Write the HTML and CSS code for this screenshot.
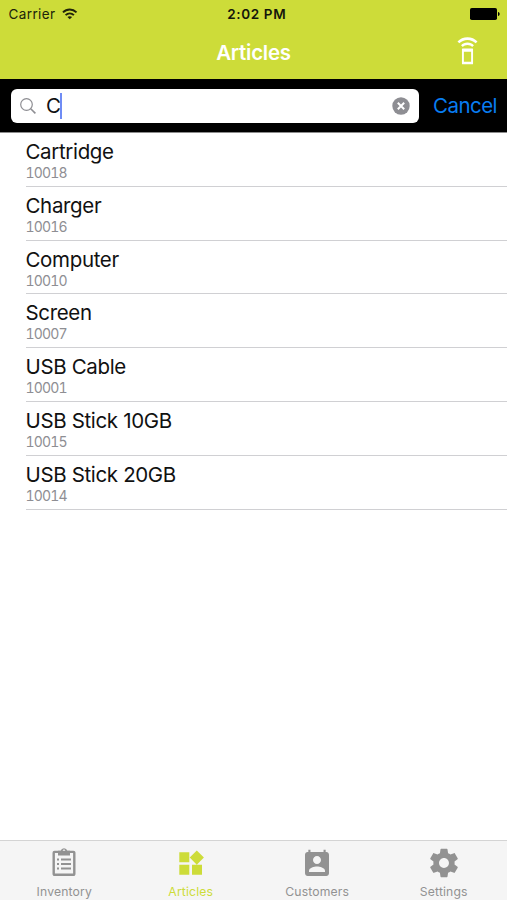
FILE: index.html
```html
<!DOCTYPE html>
<html lang="en">
<head>
<meta charset="utf-8">
<title>Articles</title>
<link rel="stylesheet" href="styles.css">
</head>
<body>
<div class="app">
  <header class="top">
    <div class="status">
      <div class="carrier"><span>Carrier</span>
        <svg class="wifi" viewBox="0 0 16 12" fill="none" stroke="#20230a" stroke-width="2"><path d="M1 4.3C5 .3 11 .3 15 4.3M3.7 7.2c2.5-2.4 6.1-2.4 8.6 0"/><path d="M8 11.5 5.6 9.2c1.3-1.2 3.5-1.2 4.8 0z" fill="#20230a" stroke="none"/></svg>
      </div>
      <span class="time">2:02 PM</span>
      <svg class="battery" viewBox="0 0 30 12"><rect width="27" height="12" rx="1.8"/><path d="M28 4c2.2.5 2.2 3.5 0 4z"/></svg>
    </div>
    <div class="nav">
      <h1>Articles</h1>
      <svg class="remote" viewBox="0 0 24 24" fill="#fff"><path d="M7 7.07 8.43 8.5c.91-.91 2.18-1.48 3.57-1.48s2.66.57 3.57 1.48L17 7.07C15.72 5.79 13.95 5 12 5s-3.72.79-5 2.07zM12 1C8.98 1 6.24 2.23 4.25 4.21l1.41 1.41C7.28 4 9.53 3 12 3s4.72 1 6.34 2.62l1.41-1.41C17.76 2.23 15.02 1 12 1z"/><path fill-rule="evenodd" d="M8.2 9.6h7.6a.5.5 0 0 1 .5.5v11.300a.5.5 0 0 1-.5.5H8.2a.5.5 0 0 1-.5-.5V10.100a.5.5 0 0 1 .5-.5zM9.2 12.200v7.700h5.600v-7.700z"/></svg>
    </div>
  </header>
  <div class="search">
    <div class="field">
      <svg class="glass" viewBox="0 0 16 16" fill="none" stroke="#8e8e93" stroke-width="1.2"><circle cx="6.5" cy="6.5" r="5.8"/><path d="m10.7 10.7 4.7 4.7" stroke-width="1.6"/></svg>
      <span class="query">C</span><span class="caret"></span>
      <svg class="clear" viewBox="0 0 18 18"><circle cx="9" cy="9" r="8.7" fill="#8e8e93"/><path d="m5.8 5.8 6.4 6.4m0-6.4-6.4 6.4" stroke="#fff" stroke-width="2"/></svg>
    </div>
    <span class="cancel">Cancel</span>
  </div>
  <ul class="list">
    <li><span class="name">Cartridge</span><span class="num">10018</span></li>
    <li><span class="name">Charger</span><span class="num">10016</span></li>
    <li><span class="name">Computer</span><span class="num">10010</span></li>
    <li><span class="name">Screen</span><span class="num">10007</span></li>
    <li><span class="name">USB Cable</span><span class="num">10001</span></li>
    <li><span class="name">USB Stick 10GB</span><span class="num">10015</span></li>
    <li><span class="name">USB Stick 20GB</span><span class="num">10014</span></li>
  </ul>
  <nav class="tabs">
    <div class="tab">
      <svg viewBox="0 0 32 32"><path d="M6.5 4.900h19a.8.8 0 0 1 .8.8v21.300a.8.8 0 0 1-.8.8h-19a.8.8 0 0 1-.8-.8V5.700a.8.8 0 0 1 .8-.8z" fill="none" stroke="currentColor" stroke-width="2.4"/><path fill="currentColor" fill-rule="evenodd" d="M10 3.800h2.700a3.400 3.400 0 0 1 6.600 0H22v4.700H10zM16 2.600a1.300 1.300 0 1 0 0 2.600 1.300 1.300 0 0 0 0-2.600z"/><path d="M9 12.500h2m2 0h10M9 17h2m2 0h10M9 21.500h2m2 0h10" stroke="currentColor" stroke-width="1.8"/></svg>
      <span>Inventory</span>
    </div>
    <div class="tab active">
      <svg viewBox="0 0 32 32" fill="currentColor"><path d="M4.3 5.2h10v10h-10zM4.3 17.8h10v10h-10zM17 17.8h10v10H17zM21.8 3.500l7.100 7.100-7.100 7.100-7.100-7.100z"/></svg>
      <span>Articles</span>
    </div>
    <div class="tab">
      <svg class="contact" viewBox="0 0 24 24" fill="currentColor"><path d="M19 3h-.5V1.300h-1.600V3H7.100V1.300H5.500V3H5c-1.110 0-2 .9-2 2v14c0 1.100.89 2 2 2h14c1.100 0 2-.9 2-2V5c0-1.100-.9-2-2-2zm-7 3c1.660 0 3 1.340 3 3s-1.340 3-3 3-3-1.340-3-3 1.340-3 3-3zm6 12H6v-1c0-2 4-3.100 6-3.100s6 1.100 6 3.100v1z"/></svg>
      <span>Customers</span>
    </div>
    <div class="tab">
      <svg class="gear" viewBox="0 0 24 24" fill="currentColor"><path d="M19.43 12.98c.04-.32.07-.64.07-.98s-.03-.66-.07-.98l2.11-1.65c.19-.15.24-.42.12-.64l-2-3.46c-.12-.22-.39-.3-.61-.22l-2.49 1c-.52-.4-1.08-.73-1.69-.98l-.38-2.65C14.46 2.18 14.25 2 14 2h-4c-.25 0-.46.18-.49.42l-.38 2.65c-.61.25-1.17.59-1.69.98l-2.49-1c-.23-.09-.49 0-.61.22l-2 3.46c-.13.22-.07.49.12.64l2.11 1.65c-.04.32-.07.65-.07.98s.03.66.07.98l-2.11 1.65c-.19.15-.24.42-.12.64l2 3.46c.12.22.39.3.61.22l2.49-1c.52.4 1.08.73 1.69.98l.38 2.65c.03.24.24.42.49.42h4c.25 0 .46-.18.49-.42l.38-2.65c.61-.25 1.17-.59 1.69-.98l2.49 1c.23.09.49 0 .61-.22l2-3.46c.12-.22.07-.49-.12-.64l-2.11-1.65zM12 15.5c-1.930 0-3.500-1.570-3.500-3.500s1.570-3.500 3.500-3.500 3.500 1.570 3.500 3.500-1.570 3.500-3.500 3.500z"/></svg>
      <span>Settings</span>
    </div>
  </nav>
</div>
</body>
</html>
```
FILE: styles.css
```css
* { box-sizing: border-box; }
body { margin: 0; background: #fff; font-family: Inter, "Liberation Sans", sans-serif; color: #111; }
.app { height: 900px; display: flex; flex-direction: column; }
.top { height: 79px; background: #cddc39; flex: none; }
.status { height: 27px; display: grid; grid-template-columns: 1fr auto 1fr; align-items: center; padding: 0 7px 0 8.5px; font-size: 13.5px; color: #20230a; }
.carrier { display: flex; align-items: center; gap: 7px; letter-spacing: .38px; }
.wifi { width: 15.5px; height: 12px; }
.time { font-weight: 600; letter-spacing: .65px; margin-left: 5px; color: #14160a; }
.battery { width: 30px; height: 12px; justify-self: end; fill: #000; }
.nav { height: 52px; display: grid; grid-template-columns: 1fr auto 1fr; align-items: center; }
h1 { grid-column: 2; margin: 0; font-size: 20.5px; line-height: 26px; font-weight: 600; letter-spacing: -.25px; color: #fff; }
.remote { width: 31px; height: 31px; justify-self: end; margin: -4px 24.5px 0 0; }
.search { height: 54px; flex: none; background: #000; border-bottom: 1px solid #8c8c8c; display: flex; align-items: center; justify-content: space-between; padding: 0 10px 0 11px; }
.field { width: 408px; height: 34px; border-radius: 6px; background: #fff; display: flex; align-items: center; padding: 0 9px; }
.glass { width: 16px; height: 16px; margin-right: 10px; }
.query { font-size: 20.5px; line-height: 26px; }
.caret { width: 2px; height: 26px; background: #6f8cf5; margin-left: -1px; }
.clear { width: 18px; height: 18px; margin-left: auto; }
.cancel { font-size: 20.5px; letter-spacing: -.55px; color: #087df2; }
.list { list-style: none; margin: 0; padding: 0 0 0 25.5px; flex: 1; }
.list li { height: 53.83px; border-bottom: 1px solid #d0d0d3; display: flex; flex-direction: column; padding-top: 6px; }
.name { font-size: 20.5px; line-height: 26px; letter-spacing: -.35px; }
.num { font-size: 14px; line-height: 16px; color: #8e8e93; font-feature-settings: "tnum"; letter-spacing: -.8px; }
.tabs { height: 60px; flex: none; background: #f5f5f5; border-top: 1px solid #d4d4d4; display: grid; grid-template-columns: repeat(4, 1fr); padding-left: 1px; }
.tab { display: flex; flex-direction: column; align-items: center; color: #929292; font-size: 12.2px; letter-spacing: .15px; padding-top: 6px; }
.tab svg { width: 32px; height: 32px; }
.tab .contact { margin: 1px 0 -1px; }
.tab .gear { width: 34px; height: 34px; margin: -1px 0; }
.tab span { line-height: 16px; margin-top: 5px; }
.active { color: #cddc39; }
```
